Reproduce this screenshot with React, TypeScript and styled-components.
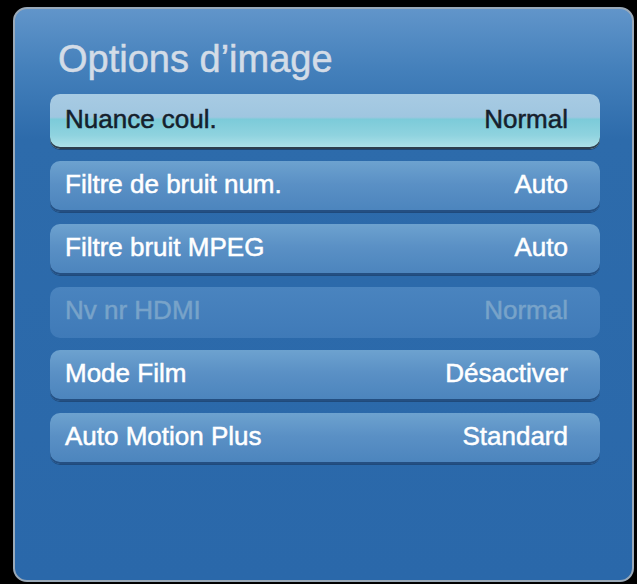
import styled, { createGlobalStyle } from 'styled-components';

type Item = { label: string; value: string; state?: 'selected' | 'disabled' };

const items: Item[] = [
  { label: 'Nuance coul.', value: 'Normal', state: 'selected' },
  { label: 'Filtre de bruit num.', value: 'Auto' },
  { label: 'Filtre bruit MPEG', value: 'Auto' },
  { label: 'Nv nr HDMI', value: 'Normal', state: 'disabled' },
  { label: 'Mode Film', value: 'Désactiver' },
  { label: 'Auto Motion Plus', value: 'Standard' },
];

export default function App() {
  return (
    <>
      <GlobalStyle />
      <Screen>
        <Panel>
          <Title>Options d’image</Title>
          <List>
            {items.map((item) => (
              <Row key={item.label} $state={item.state}>
                <span>{item.label}</span>
                <span>{item.value}</span>
              </Row>
            ))}
          </List>
        </Panel>
      </Screen>
    </>
  );
}

const GlobalStyle = createGlobalStyle`
  html, body {
    margin: 0;
    background: #000;
  }
`;

const Screen = styled.div`
  width: 637px;
  height: 584px;
  padding: 7px 3px 2px 13px;
  box-sizing: border-box;
  background: #000;
  font-family: 'Liberation Sans', Arial, sans-serif;
`;

const Panel = styled.div`
  height: 100%;
  box-sizing: border-box;
  border: 2px solid #9aa9b8;
  border-radius: 14px;
  background: linear-gradient(
    to bottom,
    #6195ca 0px,
    #4480bb 60px,
    #2d6bab 130px,
    #2a68aa 100%
  );
  padding: 28px 0 0 35px;
`;

const Title = styled.h1`
  margin: 0 0 13px 8px;
  font-size: 38px;
  font-weight: 400;
  color: #d3dce7;
  line-height: 44px;
  -webkit-text-stroke: 0.5px #d3dce7;
`;

const List = styled.div`
  display: flex;
  flex-direction: column;
  gap: 12px;
  width: 550px;
`;

const Row = styled.div<{ $state?: 'selected' | 'disabled' }>`
  display: flex;
  justify-content: space-between;
  align-items: center;
  box-sizing: border-box;
  height: ${(p) => (p.$state === 'selected' ? '55px' : '51px')};
  padding: 0 32px 5px 15px;
  border-radius: 10px;
  font-size: 26px;
  color: ${(p) =>
    p.$state === 'selected' ? '#15202c' : p.$state === 'disabled' ? '#78a3c9' : '#ffffff'};
  -webkit-text-stroke: 0.5px currentColor;
  background: ${(p) =>
    p.$state === 'selected'
      ? 'linear-gradient(to bottom, #a8cbe3 0%, #9fc6e0 42%, #7ccbd9 46%, #8fd3df 75%, #b2e2ea 100%)'
      : p.$state === 'disabled'
        ? 'linear-gradient(to bottom, #4a84bf 0%, #3f7ab8 100%)'
        : 'linear-gradient(to bottom, #6da2cf 0%, #5a90c5 45%, #4b84bd 100%)'};
  box-shadow: ${(p) =>
    p.$state === 'selected'
      ? 'inset 0 -2px 0 #2e3e4e, 0 1px 0 #1d4470'
      : p.$state === 'disabled'
        ? 'none'
        : 'inset 0 -2px 0 #244f82, 0 1px 0 #1f4a7c'};
`;
